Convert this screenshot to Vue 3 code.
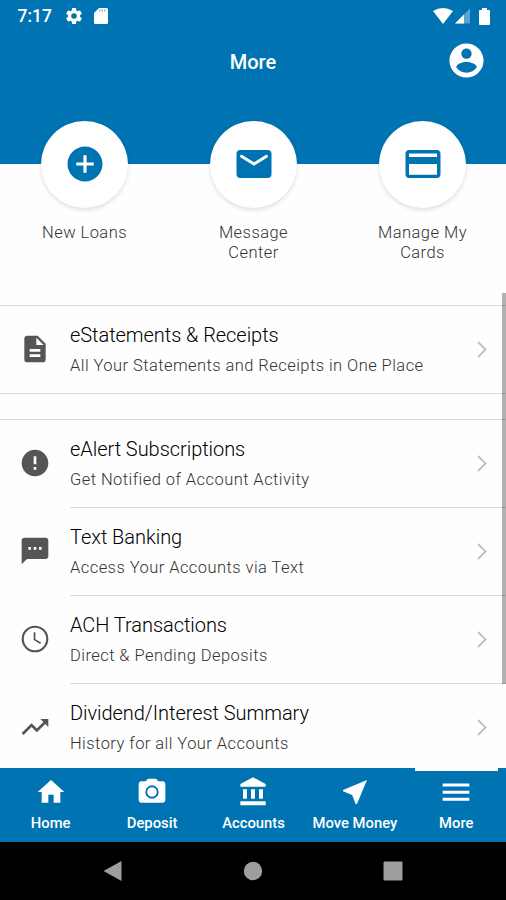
<script setup>
import { ref } from "vue";

const activeTab = ref("More");

const shortcuts = [
  {
    label: "New Loans",
    icon: "M12 2C6.48 2 2 6.48 2 12s4.48 10 10 10 10-4.48 10-10S17.52 2 12 2zm5 10.9h-4.100v4.100h-1.800v-4.100H7v-1.800h4.100V7h1.800v4.100H17v1.800z",
  },
  {
    label: "Message Center",
    icon: "M20 4H4c-1.1 0-2 .9-2 2v12c0 1.1.9 2 2 2h16c1.1 0 2-.9 2-2V6c0-1.1-.9-2-2-2zm-.4 4.250L12 13 4.400 8.250A.85.85 0 0 1 5.300 6.810L12 11l6.700-4.190a.85.85 0 0 1 .9 1.440z",
  },
  {
    label: "Manage My Cards",
    icon: "M20 4H4c-1.11 0-2 .89-2 2v12c0 1.11.89 2 2 2h16c1.11 0 2-.89 2-2V6c0-1.11-.89-2-2-2zm0 14.200H4V12h16v6.200zm0-10.200H4V6h16v2z",
  },
];

const groups = [
  [
    {
      title: "eStatements & Receipts",
      note: "All Your Statements and Receipts in One Place",
      icon: "M14 2H6c-1.1 0-2 .9-2 2v16c0 1.1.9 2 2 2h12c1.1 0 2-.9 2-2V8l-6-6zm2 16H8v-2h8v2zm0-4H8v-2h8v2zm-3-5V3.5L18.5 9H13z",
    },
  ],
  [
    {
      title: "eAlert Subscriptions",
      note: "Get Notified of Account Activity",
      icon: "M12 2C6.48 2 2 6.48 2 12s4.48 10 10 10 10-4.48 10-10S17.52 2 12 2zm1 15h-2v-2h2v2zm0-4h-2V7h2v6z",
    },
    {
      title: "Text Banking",
      note: "Access Your Accounts via Text",
      icon: "M20 2H4c-1.1 0-2 .9-2 2v18l4-4h14c1.1 0 2-.9 2-2V4c0-1.1-.9-2-2-2zM9 11H7V9h2v2zm4 0h-2V9h2v2zm4 0h-2V9h2v2z",
    },
    {
      title: "ACH Transactions",
      note: "Direct & Pending Deposits",
      icon: "M12 2a10 10 0 1 0 0 20 10 10 0 0 0 0-20zm0 18.4a8.4 8.4 0 1 1 0-16.8 8.4 8.4 0 0 1 0 16.8zM12.3 7h-1.3v5.8l4.900 2.900.7-1.100-4.300-2.500z",
    },
    {
      title: "Dividend/Interest Summary",
      note: "History for all Your Accounts",
      icon: "M16 6l2.29 2.29-4.88 4.88-4-4L2 16.59 3.41 18l6-6 4 4 6.3-6.29L22 12V6z",
    },
  ],
];

const tabs = [
  { label: "Home", icon: "M10 20v-6h4v6h5v-8h3L12 3 2 12h3v8z" },
  {
    label: "Deposit",
    icon: "M9 2L7.2 4H4c-1.1 0-2 .9-2 2v12c0 1.1.9 2 2 2h16c1.1 0 2-.9 2-2V6c0-1.1-.9-2-2-2h-3.2L15 2H9zm3 15a5 5 0 1 1 0-10 5 5 0 0 1 0 10zm0-1.4a3.6 3.6 0 1 0 0-7.2 3.6 3.6 0 0 0 0 7.2z",
  },
  {
    label: "Accounts",
    icon: "M4.5 10v7h3v-7h-3zm6 0v7h3v-7h-3zM2.5 22h19v-3h-19v3zm14-12v7h3v-7h-3zM12 1L2.5 6v2h19V6L12 1z",
  },
  { label: "Move Money", icon: "M21 3L3 10.53v.98l6.84 2.65L12.48 21h.98L21 3z" },
  { label: "More", icon: "M2 5.7h20v2.2H2zM2 11.1h20v2.200H2zM2 16.300h20v2.200H2z" },
];
</script>

<template>
  <div class="phone">
    <header class="header">
      <div class="status">
        <span class="time">7:17</span>
        <svg class="gear" viewBox="2 2 20 20">
          <path d="M19.43 12.98c.04-.32.07-.64.07-.98s-.03-.66-.07-.98l2.11-1.65c.19-.15.24-.42.12-.64l-2-3.46c-.12-.22-.39-.3-.61-.22l-2.49 1c-.52-.4-1.08-.73-1.69-.98l-.38-2.65A.49.49 0 0 0 14 2h-4c-.25 0-.46.18-.49.42l-.38 2.65c-.61.25-1.17.59-1.69.98l-2.49-1c-.23-.09-.49 0-.61.22l-2 3.46c-.13.22-.07.49.12.64l2.11 1.65c-.04.32-.07.65-.07.98s.03.66.07.98l-2.11 1.65c-.19.15-.24.42-.12.64l2 3.46c.12.22.39.3.61.22l2.49-1c.52.4 1.08.73 1.69.98l.38 2.65c.03.24.24.42.49.42h4c.25 0 .46-.18.49-.42l.38-2.65c.61-.25 1.17-.59 1.69-.98l2.49 1c.23.09.49 0 .61-.22l2-3.46c.12-.22.07-.49-.12-.64l-2.11-1.65zM12 15.5a3.5 3.5 0 1 1 0-7 3.5 3.5 0 0 1 0 7z" />
        </svg>
        <svg class="sdcard" viewBox="0 0 14 16">
          <path d="M5 0h7.500Q14 0 14 1.500v13q0 1.500-1.500 1.500h-11Q0 16 0 14.500V5z" />
          <path class="slots" d="M5 1.500h1.400v2H5zM7.600 1.500H9v2H7.600zM10.200 1.500h1.400v2h-1.400z" />
        </svg>
        <span class="spacer"></span>
        <svg class="wifi" viewBox="0 0 20 16"><path d="M0 3Q10-3 20 3L10 16z" /></svg>
        <svg class="signal" viewBox="0 0 16 16">
          <path class="faint" d="M16 0v16H0z" />
          <path d="M9.500 6.500V16H0z" />
        </svg>
        <svg class="battery" viewBox="0 0 11 17"><path d="M3 0h5v2h2q1 0 1 1v13q0 1-1 1H1q-1 0-1-1V3q0-1 1-1h2z" /></svg>
      </div>
      <div class="titlebar">
        <h1>More</h1>
        <svg class="account" viewBox="0 0 24 24">
          <path d="M12 2C6.480 2 2 6.480 2 12s4.480 10 10 10 10-4.480 10-10S17.520 2 12 2zm0 3c1.660 0 3 1.340 3 3s-1.340 3-3 3-3-1.340-3-3 1.340-3 3-3zm0 14.200c-2.500 0-4.710-1.280-6-3.220.03-1.990 4-3.080 6-3.080 1.990 0 5.970 1.090 6 3.080-1.290 1.940-3.500 3.220-6 3.220z" />
        </svg>
      </div>
    </header>

    <section class="shortcuts">
      <div v-for="item in shortcuts" :key="item.label" class="shortcut">
        <div class="bubble">
          <svg viewBox="0 0 24 24"><path :d="item.icon" /></svg>
        </div>
        <span>{{ item.label }}</span>
      </div>
    </section>

    <main class="list">
      <ul v-for="(group, index) in groups" :key="index" class="group">
        <li v-for="item in group" :key="item.title" class="row">
          <svg class="icon" viewBox="0 0 24 24"><path :d="item.icon" /></svg>
          <div class="body">
            <div class="text">
              <p class="title">{{ item.title }}</p>
              <p class="note">{{ item.note }}</p>
            </div>
            <svg class="chevron" viewBox="0 0 10 17"><path d="M1 1l7.600 7.500L1 16" /></svg>
          </div>
        </li>
      </ul>
      <div class="scrollbar"></div>
    </main>

    <nav class="tabs">
      <button v-for="tab in tabs" :key="tab.label" :class="{ active: tab.label === activeTab }" @click="activeTab = tab.label">
        <svg viewBox="0 0 24 24"><path :d="tab.icon" /></svg>
        <span>{{ tab.label }}</span>
      </button>
    </nav>

    <footer class="system">
      <svg viewBox="0 0 20 20"><path d="M18.500 0v20L.5 10z" /></svg>
      <svg viewBox="0 0 20 20"><circle cx="10" cy="10" r="9.200" /></svg>
      <svg viewBox="0 0 20 20"><rect x=".5" y=".5" width="19" height="19" rx="1.200" /></svg>
    </footer>
  </div>
</template>

<style>
body {
  margin: 0;
  background: #fff;
}
</style>

<style scoped>
.phone {
  display: flex;
  flex-direction: column;
  width: 506px;
  height: 900px;
  overflow: hidden;
  font-family: Roboto, "Liberation Sans", sans-serif;
  background: #fefefe;
}

svg {
  display: block;
  flex: none;
  fill: currentColor;
}

.header {
  flex: none;
  height: 163.5px;
  color: #fff;
  background: #0073b2;
}

.status {
  display: flex;
  align-items: center;
  box-sizing: border-box;
  height: 32px;
  padding: 0 16px 0 17.5px;
}

.time {
  width: 48.5px;
  font-size: 17.5px;
  font-weight: 500;
}

.gear {
  width: 16px;
  height: 16px;
}

.sdcard {
  width: 14px;
  height: 16px;
  margin-left: 12px;
}

.slots {
  fill: #7fb3d5;
}

.spacer {
  flex: 1;
}

.wifi {
  width: 20px;
  height: 16px;
}

.signal {
  width: 15px;
  height: 16px;
  margin-left: 2px;
}

.faint {
  opacity: 0.35;
}

.battery {
  width: 11px;
  height: 17px;
  margin-left: 9px;
}

.titlebar {
  display: grid;
  grid-template-columns: 1fr auto 1fr;
  align-items: center;
  height: 57px;
  padding: 0 19.5px;
}

h1 {
  grid-column: 2;
  margin: 2px 0 0;
  font-size: 20px;
  font-weight: 500;
}

.account {
  justify-self: end;
  width: 41px;
  height: 41px;
}

.shortcuts {
  display: grid;
  flex: none;
  grid-template-columns: repeat(3, 1fr);
  height: 172px;
  margin: -43px -1px 0 0;
}

.shortcut {
  display: flex;
  flex-direction: column;
  gap: 15px;
  align-items: center;
  color: #333;
  font-size: 16.5px;
  font-weight: 300;
  line-height: 20px;
  letter-spacing: 0.45px;
  text-align: center;
}

.shortcut span {
  width: 100px;
}

.bubble {
  display: grid;
  place-items: center;
  width: 87px;
  height: 87px;
  border-radius: 50%;
  color: #0073b2;
  background: #fff;
  box-shadow: 0 2px 4px rgb(0 0 0 / 13%);
}

.bubble svg {
  width: 42px;
  height: 42px;
}

.list {
  position: relative;
  flex: 1;
  min-height: 0;
  padding-top: 12px;
  overflow: hidden;
}

.group {
  margin: 0 0 25px;
  padding: 0;
  border-top: 1px solid #dadada;
  border-bottom: 1px solid #dadada;
  list-style: none;
}

.row {
  display: flex;
  align-items: center;
  height: 88px;
}

.row:first-child {
  height: 87px;
}

.icon {
  width: 32px;
  height: 32px;
  margin: 0 19px;
  color: #555;
}

.body {
  display: flex;
  flex: 1;
  align-items: center;
  justify-content: space-between;
  box-sizing: border-box;
  height: 100%;
  padding-right: 19.5px;
}

.row + .row .body {
  border-top: 1px solid #dadada;
}

.text {
  padding-top: 3px;
}

.text p {
  margin: 0;
  white-space: nowrap;
}

.title {
  color: #000;
  font-size: 20px;
  font-weight: 300;
  line-height: 31px;
  letter-spacing: -0.05px;
}

.note {
  color: #333;
  font-size: 16.5px;
  font-weight: 300;
  line-height: 30px;
  letter-spacing: 0.44px;
}

.chevron {
  width: 10px;
  height: 17px;
  margin-top: 1px;
  fill: none;
  stroke: #c0c0c0;
  stroke-width: 1.8;
}

.scrollbar {
  position: absolute;
  top: 0;
  right: 0;
  width: 4px;
  height: 391px;
  background: rgb(0 0 0 / 30%);
}

.tabs {
  display: grid;
  flex: none;
  grid-template-columns: repeat(5, 1fr);
  height: 74px;
  margin-right: -1px;
  background: #0073b2;
}

.tabs button {
  position: relative;
  display: flex;
  flex-direction: column;
  align-items: center;
  padding: 8px 0 0;
  border: none;
  color: #fff;
  font-family: inherit;
  font-size: 14.8px;
  font-weight: 500;
  line-height: 20px;
  white-space: nowrap;
  background: none;
}

.tabs svg {
  width: 32px;
  height: 32px;
  margin-bottom: 4.5px;
}

.tabs .active::before {
  position: absolute;
  top: 0;
  width: 83px;
  height: 2.5px;
  background: #fff;
  content: "";
}

.system {
  display: flex;
  flex: none;
  align-items: center;
  justify-content: center;
  gap: 120px;
  height: 58px;
  color: #9e9e9e;
  background: #000;
}

.system svg {
  width: 20px;
  height: 20px;
}
</style>
